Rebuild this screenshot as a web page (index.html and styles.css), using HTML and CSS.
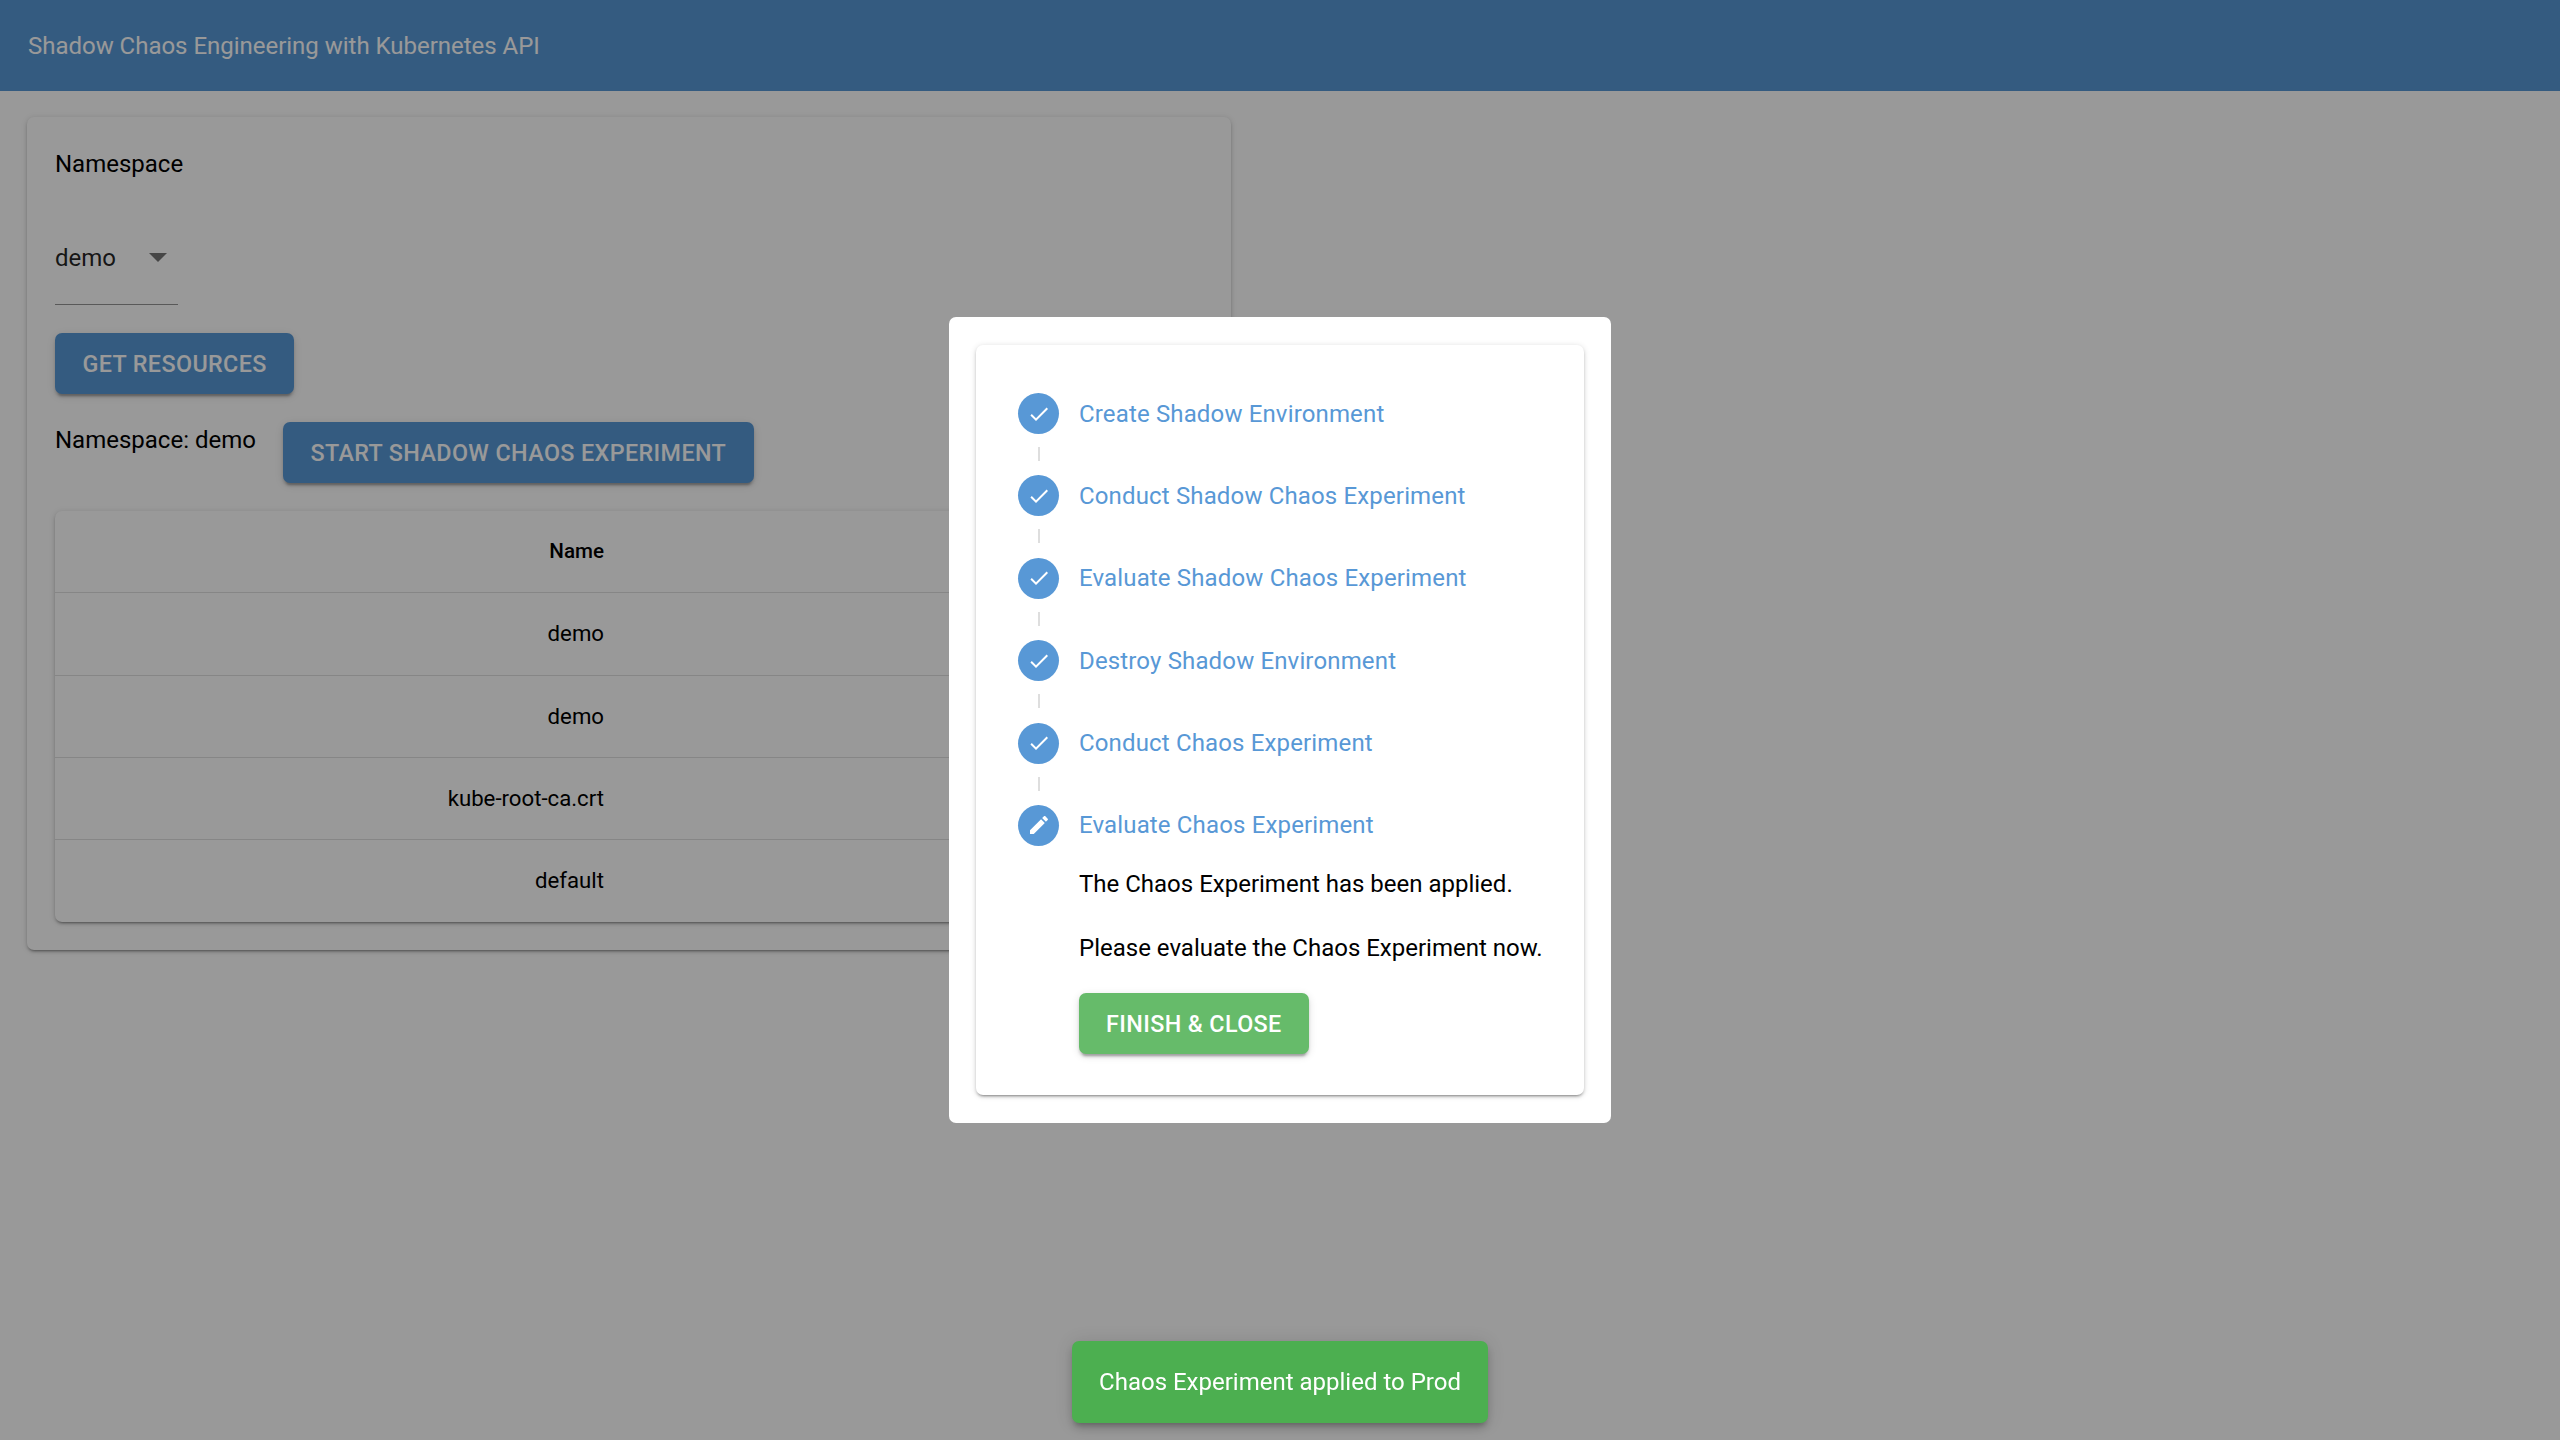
FILE: index.html
```html
<!DOCTYPE html>
<html lang="en">
<head>
<meta charset="utf-8">
<title>Shadow Chaos Engineering with Kubernetes API</title>
<link rel="stylesheet" href="styles.css">
</head>
<body>
<header class="appbar">Shadow Chaos Engineering with Kubernetes API</header>
<main class="main">
  <section class="card">
    <div class="label">Namespace</div>
    <div class="select"><span>demo</span><svg class="caret" viewBox="0 0 18 9"><path d="M0 0h18L9 9z"/></svg></div>
    <button class="btn btn-blue">Get Resources</button>
    <div class="ns-row">
      <span class="ns-text">Namespace: demo</span>
      <button class="btn btn-blue">Start Shadow Chaos Experiment</button>
    </div>
    <div class="table-wrap">
      <div class="trow thead">Name</div>
      <div class="trow">demo</div>
      <div class="trow">demo</div>
      <div class="trow">kube-root-ca.crt</div>
      <div class="trow last">default</div>
    </div>
  </section>
</main>
<div class="overlay">
  <div class="modal">
    <div class="stepper">
      <div class="step"><span class="dot"><svg viewBox="0 0 24 24"><path d="M9 16.17L4.83 12l-1.42 1.41L9 19 21 7l-1.41-1.41z"/></svg></span><span class="step-label">Create Shadow Environment</span></div>
      <div class="conn"></div>
      <div class="step"><span class="dot"><svg viewBox="0 0 24 24"><path d="M9 16.17L4.83 12l-1.42 1.41L9 19 21 7l-1.41-1.41z"/></svg></span><span class="step-label">Conduct Shadow Chaos Experiment</span></div>
      <div class="conn"></div>
      <div class="step"><span class="dot"><svg viewBox="0 0 24 24"><path d="M9 16.17L4.83 12l-1.42 1.41L9 19 21 7l-1.41-1.41z"/></svg></span><span class="step-label">Evaluate Shadow Chaos Experiment</span></div>
      <div class="conn"></div>
      <div class="step"><span class="dot"><svg viewBox="0 0 24 24"><path d="M9 16.17L4.83 12l-1.42 1.41L9 19 21 7l-1.41-1.41z"/></svg></span><span class="step-label">Destroy Shadow Environment</span></div>
      <div class="conn"></div>
      <div class="step"><span class="dot"><svg viewBox="0 0 24 24"><path d="M9 16.17L4.83 12l-1.42 1.41L9 19 21 7l-1.41-1.41z"/></svg></span><span class="step-label">Conduct Chaos Experiment</span></div>
      <div class="conn"></div>
      <div class="step"><span class="dot"><svg viewBox="0 0 24 24"><path d="M3 17.25V21h3.75L17.81 9.94l-3.75-3.75L3 17.25zM20.71 7.04c.39-.39.39-1.02 0-1.41l-2.34-2.34c-.39-.39-1.02-.39-1.41 0l-1.83 1.83 3.75 3.75 1.83-1.83z"/></svg></span><span class="step-label">Evaluate Chaos Experiment</span></div>
      <div class="step-body">
        <p class="para">The Chaos Experiment has been applied.</p>
        <p class="para para-last">Please evaluate the Chaos Experiment now.</p>
        <button class="btn btn-green">Finish &amp; Close</button>
      </div>
    </div>
  </div>
</div>
<div class="snackbar">Chaos Experiment applied to Prod</div>
</body>
</html>
```
FILE: styles.css
```css
* { box-sizing: border-box; }
html, body { height: 100%; }
body {
  margin: 0;
  background: #fff;
  color: #000;
  font-family: Roboto, "Liberation Sans", sans-serif;
  font-size: 24px;
  line-height: 36px;
  overflow: hidden;
}
.appbar {
  height: 91px;
  background: #5898d6;
  color: #fff;
  padding: 28px 27px 0 28px;
  line-height: 36px;
  font-size: 24px;
  letter-spacing: -.02px;
}
.main { padding: 26px 27px; }
.card {
  width: 1204px;
  height: 833px;
  padding: 29px 28px;
  background: #fff;
  border-radius: 7px;
  box-shadow: 0 3px 2px -2px rgba(0,0,0,.25), 0 2px 3px rgba(0,0,0,.16), 0 1px 6px rgba(0,0,0,.14);
}
.label { height: 36px; }
.select {
  margin-top: 58px;
  width: 123px;
  height: 65px;
  display: flex;
  align-items: flex-start;
  border-bottom: 1px solid #949494;
  color: rgba(0,0,0,.87);
  padding-top: 0;
}
.caret { width: 18px; height: 9px; margin: 13px 0 0 33px; fill: rgba(0,0,0,.54); }
.btn {
  display: block;
  border: 0;
  height: 61px;
  padding: 1px 27.5px 0;
  border-radius: 7px;
  font-family: inherit;
  font-size: 23.3px;
  font-weight: 500;
  letter-spacing: .4px;
  text-transform: uppercase;
  color: #fff;
  box-shadow: 0 5px 2px -3px rgba(0,0,0,.2), 0 3px 3px rgba(0,0,0,.14), 0 2px 8px rgba(0,0,0,.12);
}
.btn-blue { background: #5898d6; margin-top: 28px; }
.btn-green { background: #66bb6a; padding-left: 27px; padding-right: 27px; }
.ns-row { display: flex; align-items: flex-start; gap: 27px; margin-top: 28px; }
.ns-row .btn { margin-top: 0; }
.ns-text { display: block; }
.table-wrap {
  margin-top: 28px;
  width: 1148px;
  height: 411px;
  border-radius: 7px;
  font-size: 22.2px;
  box-shadow: 0 3px 2px -2px rgba(0,0,0,.25), 0 2px 3px rgba(0,0,0,.16), 0 1px 6px rgba(0,0,0,.14);
}
.trow {
  height: 82.3px;
  line-height: 81px;
  padding-right: 599px;
  text-align: right;
  border-bottom: 1px solid #e0e0e0;
  color: #000;
}
.thead { font-weight: 500; font-size: 20.6px; }
.trow.last { border-bottom: 0; }
.overlay {
  position: fixed;
  inset: 0;
  background: rgba(0,0,0,.4);
  display: flex;
  align-items: center;
  justify-content: center;
}
.modal {
  width: 662px;
  height: 806px;
  padding: 28px 27px;
  background: #fff;
  border-radius: 7px;
}
.stepper {
  height: 750px;
  padding: 48px 42px;
  background: #fff;
  border-radius: 7px;
  box-shadow: 0 3px 2px -2px rgba(0,0,0,.25), 0 2px 3px rgba(0,0,0,.16), 0 1px 6px rgba(0,0,0,.14);
}
.step { display: flex; align-items: center; gap: 20px; height: 41px; }
.dot {
  width: 41px;
  height: 41px;
  flex: none;
  border-radius: 50%;
  background: #5898d6;
  display: flex;
  align-items: center;
  justify-content: center;
}
.dot svg { width: 24px; height: 24px; fill: #fff; }
.step-label { color: #5898d6; font-size: 24px; letter-spacing: .15px; }
.conn { width: 2px; height: 14px; margin: 13px 0 14.4px 20px; background: #dedede; }
.step-body { padding-left: 61px; margin-top: 20px; }
.para { margin: 0 0 28.5px; height: 36px; white-space: nowrap; }
.para-last { margin-bottom: 26.5px; }
.step-body .btn-green { margin-top: 0; }
.snackbar {
  position: fixed;
  left: 1072px;
  bottom: 17px;
  width: 416px;
  height: 82px;
  line-height: 82px;
  text-align: center;
  background: #4caf50;
  color: #fff;
  border-radius: 7px;
  box-shadow: 0 5px 5px -3px rgba(0,0,0,.2), 0 6px 10px rgba(0,0,0,.14), 0 1px 18px rgba(0,0,0,.12);
}
```
